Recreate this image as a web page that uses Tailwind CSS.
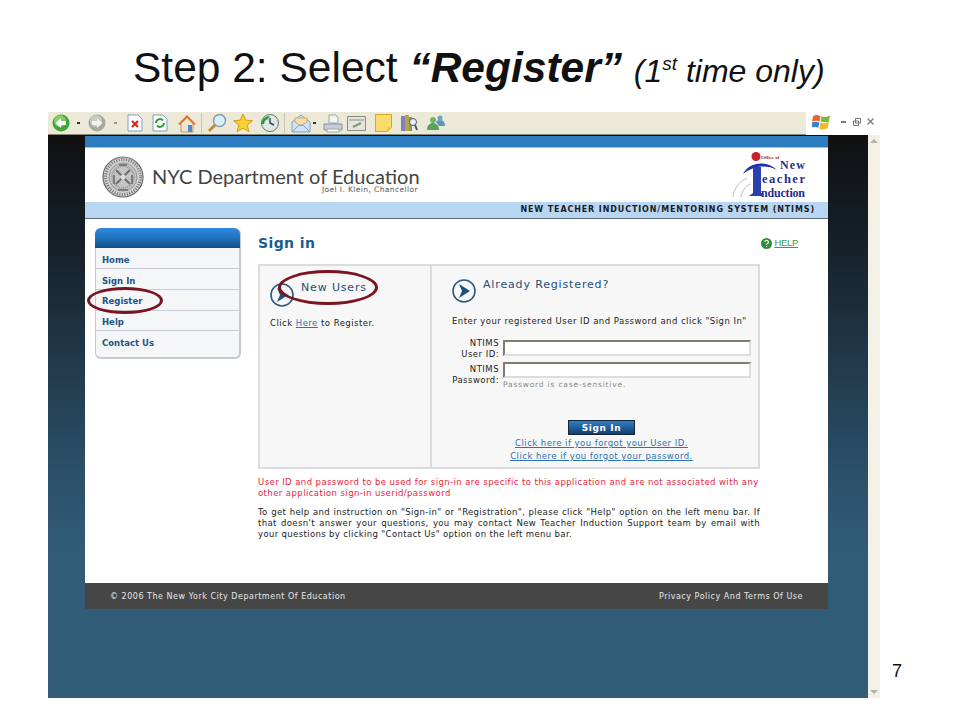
<!DOCTYPE html>
<html lang="en">
<head>
<meta charset="UTF-8">
<title>Step 2: Select Register</title>
<script src="https://cdn.jsdelivr.net/npm/@tailwindcss/browser@4"></script>
</head>
<body class="bg-white">
<div class="relative w-[960px] h-[720px] overflow-hidden bg-white font-['Liberation_Sans',sans-serif] text-black">

  <!-- slide title -->
  <h1 class="h-[112px] pl-[133px] pt-[41px] text-[42.5px] leading-[54px] whitespace-nowrap text-[#111]">Step 2: Select <b class="italic">“Register”</b> <i class="text-[32px]">(1<span class="text-[19px] relative top-[-12px]">st</span> time only)</i></h1>

  <div class="flex">
    <!-- browser screenshot -->
    <div class="ml-[48px] w-[832px] h-[586px] flex flex-col">

      <!-- IE toolbar -->
      <div class="flex h-[23px]">
        <div class="w-[758px] bg-[#ece9d8] border-b border-[#8a8878] flex items-center pl-[4px]">
          <svg class="w-[18px] h-[18px] shrink-0" viewBox="0 0 18 18"><circle cx="9" cy="9" r="8.500" fill="#3fa535"/><circle cx="8" cy="7" r="6" fill="#7fd060"/><path d="M3.500 9 9 4v3h5v4H9v3z" fill="#fff"/></svg>
          <span class="ml-[7px] w-[3px] h-[2px] bg-[#333] shrink-0"></span>
          <svg class="ml-[8px] w-[18px] h-[18px] shrink-0" viewBox="0 0 18 18"><circle cx="9" cy="9" r="8.500" fill="#a9aa9f"/><circle cx="8" cy="7" r="6" fill="#c8c9bf"/><path d="M14.500 9 9 4v3H4v4h5v3z" fill="#f4f4ee"/></svg>
          <span class="ml-[8px] w-[3px] h-[2px] bg-[#999] shrink-0"></span>
          <svg class="ml-[10px] w-[16px] h-[18px] shrink-0" viewBox="0 0 16 18"><path d="M1 1h10l4 4v12H1z" fill="#fff" stroke="#7d9fcb"/><path d="m5 7 6 6m0-6-6 6" stroke="#d9281e" stroke-width="2.200"/></svg>
          <svg class="ml-[9px] w-[16px] h-[18px] shrink-0" viewBox="0 0 16 18"><path d="M1 1h10l4 4v12H1z" fill="#fff" stroke="#7d9fcb"/><path d="M4 9a4 4 0 0 1 7-2.500M12 9a4 4 0 0 1-7 2.500" fill="none" stroke="#2e9a36" stroke-width="2"/></svg>
          <svg class="ml-[9px] w-[20px] h-[19px] shrink-0" viewBox="0 0 20 19"><path d="M4 10v8h12v-8" fill="#f0e4cf" stroke="#b79a73"/><path d="M1 10 10 1l9 9-2 1-7-7-7 7z" fill="#e2752d"/><path d="M11 11h4v7h-4z" fill="#4e8ccf"/></svg>
          <span class="ml-[4px] w-px h-[20px] bg-[#c9c6b4] shrink-0"></span>
          <svg class="ml-[5px] w-[20px] h-[20px] shrink-0" viewBox="0 0 20 20"><circle cx="12.500" cy="7.500" r="6" fill="#dcecf8" stroke="#7f9fb8" stroke-width="1.500"/><path d="m8 12-6 6" stroke="#c9892f" stroke-width="3"/></svg>
          <svg class="ml-[6px] w-[20px] h-[20px] shrink-0" viewBox="0 0 20 20"><path d="m10 1 2.700 6.100 6.600.6-5 4.400 1.500 6.500L10 15.200l-5.800 3.400 1.500-6.500-5-4.400 6.600-.6z" fill="#f7d033" stroke="#d59a10"/></svg>
          <svg class="ml-[6px] w-[21px] h-[20px] shrink-0" viewBox="0 0 21 20"><circle cx="11" cy="10" r="8.500" fill="#dfe8e4" stroke="#5c7d76"/><path d="M2 11a9 9 0 0 1 9-8l-2 3a6 6 0 0 0-4 5z" fill="#2f9a3c"/><path d="M11 5v5l4 2" fill="none" stroke="#345" stroke-width="1.500"/></svg>
          <span class="ml-[4px] w-px h-[20px] bg-[#c9c6b4] shrink-0"></span>
          <svg class="ml-[6px] w-[20px] h-[19px] shrink-0" viewBox="0 0 20 19"><path d="M1 8 10 1l9 7v10H1z" fill="#cfe2f6" stroke="#7f9fc8"/><path d="M4 8V4h12v4l-6 4z" fill="#f6dfa8" stroke="#c9a96a"/><path d="m1 18 7-7h4l7 7" fill="none" stroke="#7f9fc8"/></svg>
          <span class="ml-[2px] w-[3px] h-[2px] bg-[#333] shrink-0"></span>
          <svg class="ml-[7px] w-[20px] h-[19px] shrink-0" viewBox="0 0 20 19"><path d="M6 1h7l2 3v5H6z" fill="#f4f4f4" stroke="#9aa"/><path d="M1 10h18v6H1z" fill="#c6cdd6" stroke="#8792a0"/><path d="M4 15h12v3H4z" fill="#fff" stroke="#9aa"/></svg>
          <svg class="ml-[4px] w-[19px] h-[15px] shrink-0" viewBox="0 0 19 15"><path d="M.5.5h18v14H.5z" fill="#e4e4dc" stroke="#8b8b80"/><path d="M2 3h15v2H2z" fill="#b8b8ac"/><path d="m6 11 8-4" stroke="#7a9a78" stroke-width="2"/></svg>
          <svg class="ml-[9px] w-[17px] h-[18px] shrink-0" viewBox="0 0 17 18"><path d="M.5.5h16v13l-4 4H.5z" fill="#fbdc6a" stroke="#d3a92a"/><path d="M12.500 17.500v-4h4z" fill="#e9bf3d"/></svg>
          <svg class="ml-[8px] w-[18px] h-[18px] shrink-0" viewBox="0 0 18 18"><path d="M1 2h4v15H1z" fill="#7b84b8"/><path d="M5 1h4v16H5z" fill="#b9a24c"/><path d="M9 3h3v14H9z" fill="#7fa05e"/><circle cx="13" cy="8" r="3.500" fill="#e8f0f8" stroke="#556"/><path d="m15 11 2 5" stroke="#556" stroke-width="2"/></svg>
          <svg class="ml-[8px] w-[20px] h-[18px] shrink-0" viewBox="0 0 20 18"><circle cx="7" cy="6" r="3" fill="#6fb66a"/><path d="M1 16c0-5 3-7 6-7s6 2 6 7z" fill="#5aa25c"/><circle cx="14" cy="4" r="2.500" fill="#6aa5c9"/><path d="M10 8c1-2 3-2 4-2 3 0 5 2 5 6h-6z" fill="#5f97ba"/></svg>
        </div>
        <div class="w-[74px] bg-white flex items-center pl-[6px] pb-[4px]">
          <svg class="w-[19px] h-[18px]" viewBox="0 0 18 17"><path d="M1 3c3-2 5-1 7 0L7 8C5 7 3 7 0 8z" fill="#e8632c"/><path d="M9 3c3 1 5 1 8-1l-1 6c-3 1-5 1-8 0z" fill="#7cb93c"/><path d="M0 9c2-1 4-1 7 0l-1 5c-2-1-4-1-7 0z" fill="#3b7fd1"/><path d="M8 9c2 1 5 1 8-1l-1 6c-3 2-6 2-8 1z" fill="#f2b926"/></svg>
          <span class="ml-[10px] w-[5px] h-[2px] bg-[#777]"></span>
          <svg class="ml-[7px] w-[8px] h-[8px]" viewBox="0 0 8 8"><path d="M2.500.5h5v4.500h-5zM.5 3h5v4.500h-5z" fill="#fff" stroke="#777"/></svg>
          <svg class="ml-[6px] w-[7px] h-[7px]" viewBox="0 0 7 7"><path d="m.5.5 6 6m0-6-6 6" stroke="#777" stroke-width="1.200"/></svg>
        </div>
      </div>

      <div class="flex h-[563px]">
        <!-- IE viewport -->
        <div class="w-[820px] h-full px-[37px] pt-px bg-[linear-gradient(180deg,#101010_0%,#16212a_20%,#2b5069_60%,#305c78_75%,#305c78_100%)] font-['DejaVu_Sans',sans-serif]">
          <div class="w-[743px]">
            <div class="h-[11px] bg-[#2e7cc0]"></div>

            <!-- header -->
            <div class="h-[55px] bg-white flex border-t border-[#9ec2e2]">
              <svg class="ml-[17px] mt-[8px] w-[42px] h-[42px] shrink-0" viewBox="0 0 42 42">
                <circle cx="21" cy="21" r="20" fill="#cfcfcf" stroke="#6a6a6a" stroke-width="1.200"/>
                <circle cx="21" cy="21" r="17.500" fill="none" stroke="#777" stroke-dasharray="1 1.500" stroke-width="3"/>
                <circle cx="21" cy="21" r="14" fill="#c4c4c4" stroke="#8a8a8a" stroke-width=".8"/>
                <circle cx="21" cy="21" r="11" fill="none" stroke="#999" stroke-dasharray="1 1" stroke-width="2"/>
                <path d="m14 14 14 14m0-14L14 28" stroke="#6e6e6e" stroke-width="2"/>
                <path d="M12 19v9M30 19v9M17 9h8M16 34h10" stroke="#7c7c7c" stroke-width="2"/>
                <circle cx="21" cy="21" r="2.500" fill="#dedede"/>
              </svg>
              <div class="ml-[8px] mt-[19px] w-[266px] font-['Lato',sans-serif]">
                <div class="text-[20px] leading-[18px] text-[#444] whitespace-nowrap">NYC Department of Education</div>
                <div class="text-right text-[7.500px] leading-[8px] mt-px text-[#555] font-['DejaVu_Sans',sans-serif] tracking-[0.4px]">Joel I. Klein, Chancellor</div>
              </div>
              <!-- induction logo -->
              <svg class="ml-auto mr-[22px] mt-[3px] w-[76px] h-[50px] shrink-0" viewBox="0 0 76 50">
                <circle cx="26" cy="5.500" r="4.500" fill="#c9212a"/>
                <text x="31" y="8" font-size="5" font-weight="700" fill="#9b2c2c" font-family="Liberation Serif">Office of</text>
                <path d="M3 46c1-9 6-15 14-19" fill="none" stroke="#bbb" stroke-width="1"/>
                <path d="M11 46c1-6 4-10 9-13" fill="none" stroke="#bbb" stroke-width="1"/>
                <path d="M13 23C18 12 36 8 47 19 36 13 23 15 13 23z" fill="#1f2fa8"/>
                <path d="M23 16h8v26h1v3H19l4-3z" fill="#2a3fb0"/>
                <text x="50" y="17.500" font-size="12" font-weight="700" fill="#1f2f8f" font-family="Liberation Serif" textLength="25">New</text>
                <text x="32" y="32" font-size="12.500" font-weight="700" fill="#1f2f8f" font-family="Liberation Serif" textLength="43">eacher</text>
                <text x="31" y="45.500" font-size="12" font-weight="700" fill="#1f2f8f" font-family="Liberation Serif" textLength="44">nduction</text>
              </svg>
            </div>

            <!-- banner -->
            <div class="h-[17px] bg-[#b8d6f2] border-b border-[#5d6b78] flex items-center justify-end pr-[13px] text-[8px] font-bold tracking-[0.88px] text-[#1c1c24] whitespace-nowrap">NEW TEACHER INDUCTION/MENTORING SYSTEM (NTIMS)</div>

            <!-- content -->
            <div class="h-[364px] bg-white flex pt-[9px] pl-[10px]">
              <!-- left menu -->
              <div class="w-[146px] h-[131px] shrink-0 rounded-[6px] bg-[#f4f6f8] border-r-2 border-b-2 border-l border-[#c4cad1] text-[8.500px] font-bold text-[#1d5488]">
                <div class="h-[20px] -mx-px rounded-t-[6px] bg-[linear-gradient(180deg,#2f8be0_0%,#1f6fb8_55%,#0f4d82_100%)]"></div>
                <div class="h-[21px] pl-[6px] pt-[4px] flex items-center border-b border-[#c8ced6]">Home</div>
                <div class="h-[21px] pl-[6px] pt-[4px] flex items-center border-b border-[#c8ced6]">Sign In</div>
                <div class="h-[21px] pl-[6px] pt-[3px] flex items-center border-b border-[#c8ced6]">Register</div>
                <div class="h-[20px] pl-[6px] pt-[4px] flex items-center border-b border-[#c8ced6]">Help</div>
                <div class="h-[21px] pl-[6px] pt-[3px] flex items-center">Contact Us</div>
              </div>

              <!-- main column -->
              <div class="ml-[17px] w-[502px] shrink-0">
                <div class="flex items-center h-[36px] pb-[6px] w-[540px]">
                  <span class="text-[14px] font-bold tracking-[0.4px] text-[#1a5c94]">Sign in</span>
                  <svg class="ml-auto w-[11px] h-[11px]" viewBox="0 0 11 11"><circle cx="5.500" cy="5.500" r="5.500" fill="#2e8b3a"/><path d="M3.800 4a1.800 1.800 0 1 1 2.500 1.700c-.6.3-.8.6-.8 1.100M5.500 8v1" fill="none" stroke="#fff" stroke-width="1.200"/></svg>
                  <span class="ml-[2px] text-[9.500px] tracking-[-0.3px] leading-[12px] underline text-[#3c9a48] font-['Liberation_Sans',sans-serif]">HELP</span>
                </div>

                <!-- sign in box -->
                <div class="flex h-[205px] w-[502px] border-2 border-[#dcdcdc] bg-[#f7f7f7] text-[8.500px] tracking-[0.47px] text-[#222]">
                  <div class="w-[172px] shrink-0 border-r-2 border-[#dcdcdc] pl-[10px] pt-[17px]">
                    <div class="flex h-[24px]">
                      <svg class="w-[24px] h-[24px] shrink-0" viewBox="0 0 24 24"><circle cx="12" cy="12" r="11" fill="#f7f7f7" stroke="#2c5a80" stroke-width="1.600"/><path d="m7 5 11 7-11 7 3-7z" fill="#1d4f7c"/></svg>
                      <span class="ml-[7px] -mt-px text-[11px] leading-[12px] tracking-[0.85px] text-[#1d4f7c]">New Users</span>
                    </div>
                    <p class="mt-[11px] leading-[10px]">Click <a class="text-[#2b73b5] underline">Here</a> to Register.</p>
                  </div>
                  <div class="flex-1 pl-[20px] pt-[13px]">
                    <div class="flex h-[24px]">
                      <svg class="w-[24px] h-[24px] shrink-0" viewBox="0 0 24 24"><circle cx="12" cy="12" r="11" fill="#f7f7f7" stroke="#2c5a80" stroke-width="1.600"/><path d="m7 5 11 7-11 7 3-7z" fill="#1d4f7c"/></svg>
                      <span class="ml-[7px] text-[11px] leading-[12px] tracking-[0.85px] text-[#1d4f7c] whitespace-nowrap">Already Registered?</span>
                    </div>
                    <p class="mt-[13px] leading-[10px] whitespace-nowrap">Enter your registered User ID and Password and click "Sign In"</p>
                    <div class="mt-[14px] flex h-[22px]">
                      <div class="w-[47px] -mt-[2px] text-right leading-[10.500px]">NTIMS<br>User ID:</div>
                      <div class="ml-[4px] w-[248px] h-[16px] bg-white border-2 border-t-[#807c70] border-l-[#807c70] border-r-[#ddd] border-b-[#ddd]"></div>
                    </div>
                    <div class="flex h-[27px]">
                      <div class="w-[47px] mt-[2px] text-right leading-[10.500px]">NTIMS<br>Password:</div>
                      <div class="ml-[4px] w-[248px]">
                        <div class="h-[16px] bg-white border-2 border-t-[#807c70] border-l-[#807c70] border-r-[#ddd] border-b-[#ddd]"></div>
                        <div class="mt-[2px] text-[7.500px] tracking-[0.8px] leading-[9px] text-[#8a8a8a] whitespace-nowrap">Password is case-sensitive.</div>
                      </div>
                    </div>
                    <div class="w-[299px] flex flex-col items-center">
                      <button class="mt-[31px] w-[67px] h-[15px] border border-[#14263a] bg-[linear-gradient(180deg,#2f7fc6,#123f70)] text-[9px] leading-[12px] font-bold tracking-[0.6px] text-white">Sign In</button>
                      <a class="mt-[3px] leading-[10px] underline text-[#2b73b5] whitespace-nowrap">Click here if you forgot your User ID.</a>
                      <a class="mt-[3px] leading-[10px] underline text-[#2b73b5] whitespace-nowrap">Click here if you forgot your password.</a>
                    </div>
                  </div>
                </div>

                <p class="mt-[8px] text-[8.500px] leading-[11px] tracking-[0.42px] text-[#e8243c] whitespace-nowrap">User ID and password to be used for sign-in are specific to this application and are not associated with any<br>other application sign-in userid/password</p>
                <p class="mt-[8px] text-[8.500px] leading-[11px] tracking-[0.36px] text-[#222] text-justify">To get help and instruction on "Sign-in" or "Registration", please click "Help" option on the left menu bar. If that doesn't answer your questions, you may contact New Teacher Induction Support team by email with your questions by clicking "Contact Us" option on the left menu bar.</p>
              </div>
            </div>

            <!-- footer -->
            <div class="h-[26px] pt-[2px] bg-[#464646] flex items-center justify-between pl-[25px] pr-[25px] text-[8px] tracking-[0.52px] text-[#e6e6e6] whitespace-nowrap">
              <span>© 2006 The New York City Department Of Education</span>
              <span>Privacy Policy And Terms Of Use</span>
            </div>
          </div>
        </div>

        <!-- scrollbar -->
        <div class="w-[12px] h-full bg-[#f3f1e6] flex flex-col justify-between items-center py-[4px]">
          <span class="w-0 h-0 border-x-[4px] border-x-transparent border-b-[4px] border-b-[#b5b3a5]"></span>
          <span class="w-0 h-0 border-x-[4px] border-x-transparent border-t-[4px] border-t-[#b5b3a5]"></span>
        </div>
      </div>
    </div>

    <!-- page number -->
    <div class="ml-[12px] self-end pb-[16px] text-[18px] leading-[22px] text-[#111]">7</div>
  </div>

  <!-- red hand-drawn marks over the screenshot -->
  <div class="absolute left-[87px] top-[287px] w-[76px] h-[27px] rounded-[50%] border-[3.500px] border-[#7a1420]"></div>
  <div class="absolute left-[278px] top-[270px] w-[100px] h-[35px] rounded-[50%] border-[3.500px] border-[#7a1420]"></div>
</div>
</body>
</html>
